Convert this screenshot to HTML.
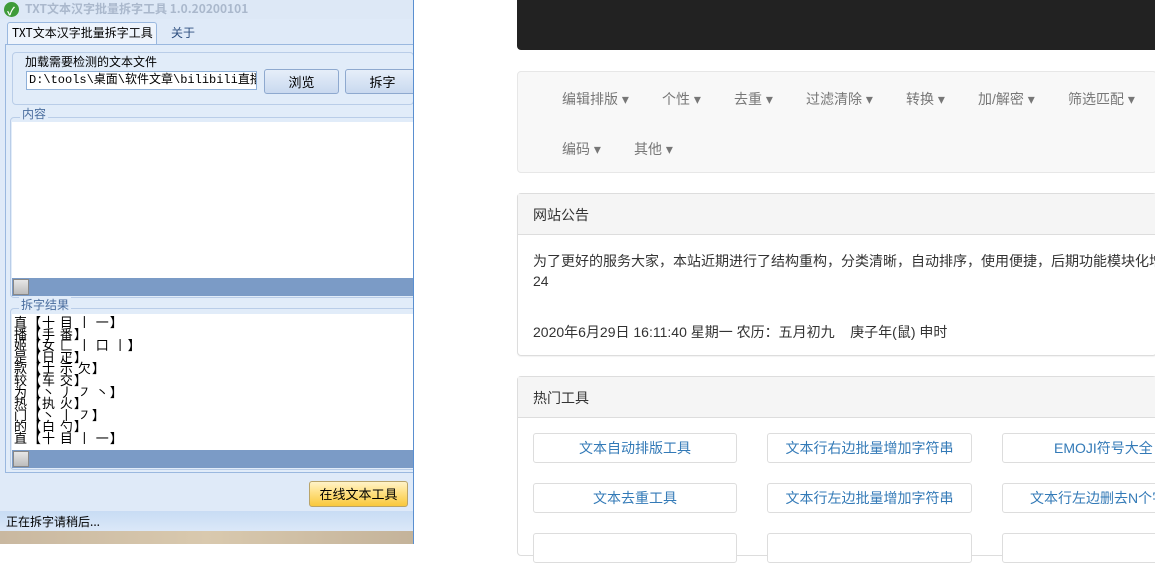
<!DOCTYPE html>
<html><head><meta charset="utf-8"><style>
*{margin:0;padding:0;box-sizing:border-box}
body{width:1155px;height:544px;overflow:hidden;position:relative;background:#fff;font-family:"Liberation Sans","Noto Sans CJK SC",sans-serif}
.a{position:absolute}
.win{left:0;top:0;width:414px;height:544px;background:#dfeaf8;border-right:1px solid #5a8fd0;overflow:hidden}
.cj{font-family:"Noto Sans CJK SC","WenQuanYi Zen Hei",sans-serif}
.btn{background:linear-gradient(#e6eef9,#c9d9ef);border:1px solid #8ea9cf;border-radius:3px;font-size:13px;text-align:center;line-height:23px;color:#000}
.sb{background:#7b9bc6;height:18px}
.sbb{left:1px;top:1px;width:16px;height:16px;background:linear-gradient(#e6e6e6,#bcbcbc);border:1px solid #888}
.res{font-size:13px;line-height:11.6px;letter-spacing:1px;color:#000;font-family:"WenQuanYi Zen Hei","Noto Sans CJK SC",sans-serif;white-space:pre}
.nav{font-size:14px;color:#777}
.nav span{position:absolute;white-space:nowrap}
.tb{height:30px;border:1px solid #ddd;border-radius:3px;background:#fff;color:#337ab7;font-size:14px;text-align:center;line-height:28px;white-space:nowrap;overflow:hidden}
</style></head><body>
<div class="a win">
 <div class="a" style="left:0;top:0;width:414px;height:19px;background:#dde8f6"></div>
 <div class="a" style="left:4px;top:2px;width:15px;height:15px;border-radius:50%;background:#3f9b3a"></div>
 <div class="a" style="left:7px;top:3px;color:#fff;font-size:11px;font-weight:bold">✓</div>
 <div class="a cj" style="left:25px;top:1px;font-size:12px;font-weight:bold;color:#aab8cc;line-height:16px">TXT文本汉字批量拆字工具 1.0.20200101</div>
 <div class="a" style="left:7px;top:22px;width:150px;height:23px;background:#eef4fc;border:1px solid #9ab8df;border-bottom:none;border-radius:3px 3px 0 0"></div>
 <div class="a cj" style="left:12px;top:25px;font-size:12px;line-height:15px">TXT文本汉字批量拆字工具</div>
 <div class="a cj" style="left:171px;top:24px;font-size:12px;color:#2e4f7f">关于</div>
 <div class="a" style="left:5px;top:44px;width:412px;height:429px;border:1px solid #9ab8df;background:#e1ecf9"></div>
 <div class="a" style="left:12px;top:52px;width:402px;height:53px;border:1px solid #b9cde8;border-radius:4px"></div>
 <div class="a cj" style="left:25px;top:54px;font-size:12px;line-height:16px">加载需要检测的文本文件</div>
 <div class="a" style="left:26px;top:71px;width:231px;height:19px;background:#fff;border:1px solid #8eb0d8;font-family:'Liberation Mono','WenQuanYi Zen Hei',monospace;font-size:12px;line-height:17px;padding-left:2px;white-space:nowrap;overflow:hidden">D:\tools\桌面\软件文章\bilibili直播姬.</div>
 <div class="a btn cj" style="left:264px;top:69px;width:75px;height:25px">浏览</div>
 <div class="a btn cj" style="left:345px;top:69px;width:75px;height:25px">拆字</div>
 <div class="a" style="left:10px;top:117px;width:410px;height:181px;border:1px solid #b9cde8;border-radius:4px"></div>
 <div class="a cj" style="left:20px;top:105px;font-size:12px;color:#4a6d9e;background:#e1ecf9;padding:0 2px">内容</div>
 <div class="a" style="left:12px;top:122px;width:402px;height:157px;background:#fff"></div>
 <div class="a sb" style="left:12px;top:278px;width:402px"><div class="a sbb"></div></div>
 <div class="a" style="left:10px;top:308px;width:410px;height:162px;border:1px solid #b9cde8;border-radius:4px"></div>
 <div class="a cj" style="left:19px;top:296px;font-size:12px;color:#4a6d9e;background:#e1ecf9;padding:0 2px">拆字结果</div>
 <div class="a" style="left:12px;top:314px;width:402px;height:137px;background:#fff"></div>
 <div class="a res" style="left:14px;top:316px">直【十 目 丨 一】
播【手 番】
姬【女 匚 丨 口 丨】
是【日 疋】
款【士 示 欠】
较【车 交】
为【丶 丿 ㇇ 丶】
热【执 火】
门【丶 丨 ㇇】
的【白 勺】
直【十 目 丨 一】</div>
 <div class="a sb" style="left:12px;top:450px;width:402px"><div class="a sbb"></div></div>
 <div class="a cj" style="left:309px;top:481px;width:99px;height:26px;border:1px solid #b9a46a;border-radius:3px;background:linear-gradient(#fff3c8 0%,#ffe28a 40%,#f9c83c 100%);font-size:13px;text-align:center;line-height:24px">在线文本工具</div>
 <div class="a" style="left:0;top:511px;width:414px;height:20px;background:linear-gradient(#c8dcf4,#dbe8f8)"></div>
 <div class="a cj" style="left:6px;top:514px;font-size:12px;line-height:15px">正在拆字请稍后...</div>
 <div class="a" style="left:0;top:531px;width:414px;height:13px;background:linear-gradient(90deg,#c9b8a0,#d9c9ae,#c4b39a)"></div>
</div>
<div class="a" style="left:517px;top:0;width:640px;height:50px;background:#222;border-radius:0 0 0 4px"></div>
<div class="a" style="left:517px;top:71px;width:640px;height:102px;background:#f8f8f8;border:1px solid #e7e7e7;border-radius:4px"></div>
<div class="a nav" style="left:0;top:0;width:1155px">
 <span style="left:562px;top:89px">编辑排版 ▾</span><span style="left:662px;top:89px">个性 ▾</span><span style="left:734px;top:89px">去重 ▾</span><span style="left:806px;top:89px">过滤清除 ▾</span><span style="left:906px;top:89px">转换 ▾</span><span style="left:978px;top:89px">加/解密 ▾</span><span style="left:1068px;top:89px">筛选匹配 ▾</span>
 <span style="left:562px;top:139px">编码 ▾</span><span style="left:634px;top:139px">其他 ▾</span>
</div>
<div class="a" style="left:517px;top:193px;width:640px;height:163px;border:1px solid #ddd;border-radius:4px;box-shadow:0 1px 1px rgba(0,0,0,.05)"></div>
<div class="a" style="left:518px;top:194px;width:640px;height:41px;background:#f5f5f5;border-bottom:1px solid #ddd"></div>
<div class="a" style="left:533px;top:205px;font-size:14px;color:#333">网站公告</div>
<div class="a" style="left:533px;top:251px;font-size:14px;color:#333;white-space:nowrap;line-height:20px">为了更好的服务大家，本站近期进行了结构重构，分类清晰，自动排序，使用便捷，后期功能模块化增<br>24</div>
<div class="a" style="left:533px;top:322px;font-size:14px;color:#333;white-space:pre">2020年6月29日 16:11:40 星期一 农历：五月初九    庚子年(鼠) 申时</div>
<div class="a" style="left:517px;top:376px;width:640px;height:180px;border:1px solid #ddd;border-radius:4px"></div>
<div class="a" style="left:518px;top:377px;width:640px;height:41px;background:#f5f5f5;border-bottom:1px solid #ddd"></div>
<div class="a" style="left:533px;top:388px;font-size:14px;color:#333">热门工具</div>
<div class="a tb" style="left:533px;top:433px;width:204px">文本自动排版工具</div>
<div class="a tb" style="left:767px;top:433px;width:205px">文本行右边批量增加字符串</div>
<div class="a tb" style="left:1002px;top:433px;width:160px;text-align:left;padding-left:51px">EMOJI符号大全</div>
<div class="a tb" style="left:533px;top:483px;width:204px">文本去重工具</div>
<div class="a tb" style="left:767px;top:483px;width:205px">文本行左边批量增加字符串</div>
<div class="a tb" style="left:1002px;top:483px;width:160px;text-align:left;padding-left:27px">文本行左边删去N个字</div>
<div class="a tb" style="left:533px;top:533px;width:204px"></div>
<div class="a tb" style="left:767px;top:533px;width:205px"></div>
<div class="a tb" style="left:1002px;top:533px;width:160px"></div>
</body></html>
